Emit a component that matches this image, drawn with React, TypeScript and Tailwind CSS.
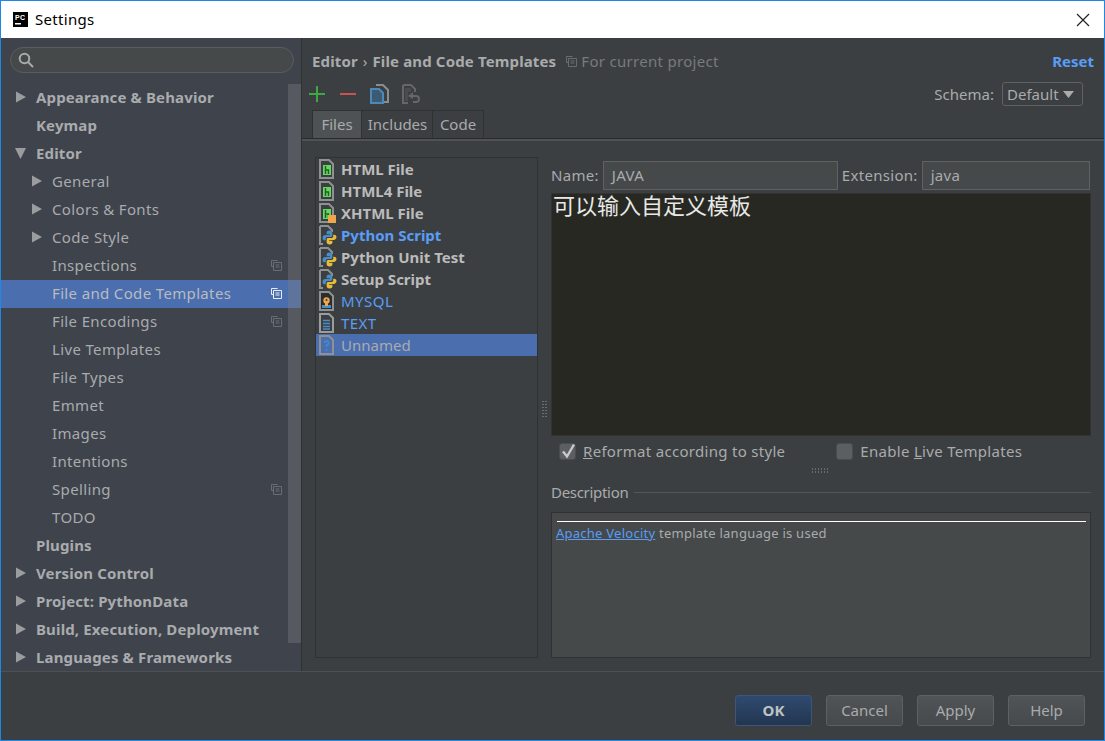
import React from 'react';

const font = "font-['Noto_Sans','Noto_Sans_CJK_SC',sans-serif]";

const Caret = ({ open }: { open?: boolean }) => (
  <svg width="12" height="14" viewBox="0 0 12 14" className="shrink-0">
    {open ? <path d="M1 2h11L6.5 13z" fill="#9a9c9e" /> : <path d="M2 1.5v11l10-5.5z" fill="#9a9c9e" />}
  </svg>
);

const ProjectIcon = ({ active }: { active?: boolean }) => {
  const c = active ? '#e8edf5' : '#6a6d70';
  return (
    <svg width="12" height="12" viewBox="0 0 12 12" fill="none" className="shrink-0">
      <path d="M7.5 1.5h-6v6H3.5" stroke={c} />
      <path d="M3.5 3.5h8v8h-8z" stroke={c} />
      <path d="M5.5 6h4M5.5 8h4" stroke={c} />
    </svg>
  );
};

const tree: { label: string; level: number; caret?: 'open' | 'closed'; icon?: boolean; active?: boolean }[] = [
  { label: 'Appearance & Behavior', level: 0, caret: 'closed' },
  { label: 'Keymap', level: 0 },
  { label: 'Editor', level: 0, caret: 'open' },
  { label: 'General', level: 1, caret: 'closed' },
  { label: 'Colors & Fonts', level: 1, caret: 'closed' },
  { label: 'Code Style', level: 1, caret: 'closed' },
  { label: 'Inspections', level: 1, icon: true },
  { label: 'File and Code Templates', level: 1, icon: true, active: true },
  { label: 'File Encodings', level: 1, icon: true },
  { label: 'Live Templates', level: 1 },
  { label: 'File Types', level: 1 },
  { label: 'Emmet', level: 1 },
  { label: 'Images', level: 1 },
  { label: 'Intentions', level: 1 },
  { label: 'Spelling', level: 1, icon: true },
  { label: 'TODO', level: 1 },
  { label: 'Plugins', level: 0 },
  { label: 'Version Control', level: 0, caret: 'closed' },
  { label: 'Project: PythonData', level: 0, caret: 'closed' },
  { label: 'Build, Execution, Deployment', level: 0, caret: 'closed' },
  { label: 'Languages & Frameworks', level: 0, caret: 'closed' },
];

const Sidebar = () => (
  <aside className="relative flex w-[301px] shrink-0 flex-col border-r border-[#2f3133] bg-[#3e434c]">
    <div className="flex h-[46px] shrink-0 items-center pb-[6px] pl-[9px] pt-[4px]">
      <div className="flex h-[26px] w-[284px] shrink-0 items-center rounded-[13px] border border-[#5a5d5f] bg-[#45494a] pl-[6px]">
        <svg width="18" height="18" viewBox="0 0 18 18" fill="none">
          <circle cx="7.5" cy="7.5" r="4.8" stroke="#a8aaac" strokeWidth="2" />
          <path d="M11 11l5 5" stroke="#a8aaac" strokeWidth="2" />
        </svg>
      </div>
    </div>
    <div className="min-h-0 flex-1 overflow-hidden">
      {tree.map((row) => (
        <div
          key={row.label}
          className={`flex h-[28px] items-center pb-[2px] pr-[19px] text-[15px] ${row.active ? 'bg-[#4b6eaf]' : ''} ${
            row.level === 0 ? 'font-bold tracking-[0.14px]' : 'tracking-[0.35px]'
          } ${row.active ? 'text-[#b9bcbf]' : 'text-[#a9abad]'}`}
        >
          <span className={`flex shrink-0 justify-end pr-[2px] ${row.level === 0 ? 'w-[27px]' : 'w-[43px]'}`}>
            {row.caret && <Caret open={row.caret === 'open'} />}
          </span>
          <span className="ml-[8px]">{row.label}</span>
          {row.icon && (
            <span className="ml-auto">
              <ProjectIcon active={row.active} />
            </span>
          )}
        </div>
      ))}
    </div>
    {/* scrollbar */}
    <div className="absolute right-0 top-[46px] h-[559px] w-[13px] bg-[#7a7d80]/40" />
  </aside>
);

const HtmlIcon = ({ badge }: { badge?: boolean }) => (
  <svg width="18" height="20" viewBox="0 0 18 20" className="shrink-0">
    <path d="M1 1h9l4 4v14H1z" fill="#3c3f41" stroke="#8e9092" strokeWidth="2" />
    <rect x="4" y="6" width="8" height="10" fill="#62d95f" />
    <path d="M6.5 7v8M6.5 11h3v4" stroke="#2b5a2a" strokeWidth="1.4" fill="none" />
    {badge && <rect x="9" y="12" width="8" height="8" fill="#f0a64b" />}
  </svg>
);

const snake =
  'M8.5 0C5.5 0 5 1.4 5 3V4.5H9V5.5H3.5C1.5 5.5 0 6.8 0 9C0 11 1.2 12 3 12H4V10C4 8.8 5 7.8 6.2 7.8H10C11.2 7.8 12 7 12 6V3C12 1 10.8 0 8.5 0Z';

const PythonIcon = () => (
  <svg width="18" height="20" viewBox="0 0 18 20" className="shrink-0">
    <path d="M1 1h8l4 4v2M1 1v18h3" fill="none" stroke="#8e9092" strokeWidth="2" />
    <g transform="translate(3.5 5.5) scale(0.82)">
      <path d={snake} fill="#4a8cc4" />
    </g>
    <g transform="rotate(180 10.5 12.5) translate(3.5 5.5) scale(0.82)">
      <path d={snake} fill="#e8bc34" />
    </g>
  </svg>
);

const MysqlIcon = () => (
  <svg width="18" height="20" viewBox="0 0 18 20" className="shrink-0">
    <path d="M1 1h9l4 4v14H1z" fill="#2b2d2f" stroke="#8e9092" strokeWidth="2" />
    <rect x="3" y="14" width="9" height="3" fill="#4a8cc4" />
    <circle cx="7.5" cy="9.5" r="3.2" fill="#f0a64b" />
    <rect x="6" y="12" width="3" height="3" fill="#f0a64b" />
    <circle cx="7.5" cy="9" r="1" fill="#3c3f41" />
  </svg>
);

const TextIcon = () => (
  <svg width="18" height="20" viewBox="0 0 18 20" className="shrink-0">
    <path d="M1 1h9l4 4v14H1z" fill="#3c3f41" stroke="#9a9c9e" strokeWidth="2" />
    <path d="M4 7.5h7M4 10.5h7M4 13.5h7M4 16h7" stroke="#4a8cc4" strokeWidth="1.4" />
  </svg>
);

const UnknownIcon = () => (
  <svg width="18" height="20" viewBox="0 0 18 20" className="shrink-0">
    <path d="M1 1h9l4 4v14H1z" fill="#4b6eaf" stroke="#8e9092" strokeWidth="2" />
    <path d="M5.5 8q0-2 2-2t2 2-2 2v2M7.5 14v2" fill="none" stroke="#3d8fd0" strokeWidth="1.4" />
  </svg>
);

const files: { label: string; icon: React.ReactNode; cls: string; selected?: boolean }[] = [
  { label: 'HTML File', icon: <HtmlIcon />, cls: 'font-bold text-[#bbbbbb]' },
  { label: 'HTML4 File', icon: <HtmlIcon />, cls: 'font-bold text-[#bbbbbb]' },
  { label: 'XHTML File', icon: <HtmlIcon badge />, cls: 'font-bold text-[#bbbbbb]' },
  { label: 'Python Script', icon: <PythonIcon />, cls: 'font-bold text-[#589df6]' },
  { label: 'Python Unit Test', icon: <PythonIcon />, cls: 'font-bold text-[#bbbbbb]' },
  { label: 'Setup Script', icon: <PythonIcon />, cls: 'font-bold text-[#bbbbbb]' },
  { label: 'MYSQL', icon: <MysqlIcon />, cls: 'tracking-[0.5px] text-[#589df6]' },
  { label: 'TEXT', icon: <TextIcon />, cls: 'tracking-[0.4px] text-[#589df6]' },
  { label: 'Unnamed', icon: <UnknownIcon />, cls: 'text-[#a9abad]', selected: true },
];

const Toolbar = () => (
  <div className="flex h-[24px] items-center pl-[7px]">
    <svg width="16" height="16" viewBox="0 0 16 16" className="shrink-0">
      <path d="M8 0v16M0 8h16" stroke="#3ea843" strokeWidth="2" />
    </svg>
    <svg width="16" height="16" viewBox="0 0 16 16" className="ml-[15px] shrink-0">
      <path d="M0 8h16" stroke="#c75450" strokeWidth="2" />
    </svg>
    <svg width="19" height="20" viewBox="0 0 19 20" fill="none" className="ml-[14px] shrink-0">
      <path d="M6 1h7l5 5v12h-4" stroke="#8a8c8e" strokeWidth="2" />
      <path d="M1 5h8l4 4v10H1z" stroke="#4d88b8" strokeWidth="2" fill="#3c5a72" />
    </svg>
    <svg width="18" height="20" viewBox="0 0 18 20" fill="none" className="ml-[13px] shrink-0">
      <path d="M1 1h8l4 4v3M1 1v18h5" stroke="#646668" strokeWidth="2" />
      <path d="M3 4h6v4H3zM3 8h3v9H3z" fill="#4a4d4f" />
      <path d="M11 8L6 12l5 3v-2h3q2 0 2 2t-2 2h-3v2h3q4 0 4-4t-4-4h-3z" fill="#646668" />
    </svg>
  </div>
);

const Tabs = () => (
  <div className="mt-[4px] flex h-[28px] pl-[10px]">
    <div className="flex w-[50px] items-center justify-center border border-b-0 border-[#2f3133] bg-[#4e5254] text-[15px] text-[#a9abad]">Files</div>
    <div className="flex w-[71px] items-center justify-center border border-b-0 border-l-0 border-[#2f3133] pl-[1px] text-[15px] text-[#a9abad]">Includes</div>
    <div className="flex w-[51px] items-center justify-center border border-b-0 border-l-0 border-[#2f3133] text-[15px] text-[#a9abad]">Code</div>
  </div>
);

const FileList = () => (
  <div className="h-[501px] w-[223px] shrink-0 border border-[#2f3133]">
    {files.map((f) => (
      <div key={f.label} className={`flex h-[22px] items-center pl-[3px] text-[15px] ${f.selected ? 'bg-[#4b6eaf]' : ''}`}>
        <span className="flex w-[22px] shrink-0 items-center">{f.icon}</span>
        <span className={f.cls}>{f.label}</span>
      </div>
    ))}
  </div>
);

const Grip = ({ vertical }: { vertical?: boolean }) => (
  <svg width={vertical ? 5 : 18} height={vertical ? 18 : 5} className="shrink-0" fill="none">
    {vertical ? (
      <path d="M1 0v18M4 0v18" stroke="#9a9c9e" strokeDasharray="1 2" />
    ) : (
      <path d="M0 1h18M0 4h18" stroke="#9a9c9e" strokeDasharray="1 2" />
    )}
  </svg>
);

const Editor = () => (
  <div className="flex min-w-0 flex-1 flex-col">
    <div className="flex h-[29px] items-center pr-[1px] text-[15px] tracking-[0.3px] text-[#a9abad]">
      <span>Name:</span>
      <div className="ml-[4px] flex h-[29px] w-[235px] items-center border border-[#5f6163] bg-[#45494a] pl-[8px] text-[#a9abad]">JAVA</div>
      <span className="ml-[4px]">Extension:</span>
      <div className="ml-[4px] flex h-[29px] flex-1 items-center border border-[#5f6163] bg-[#45494a] pl-[8px] text-[#a9abad]">java</div>
    </div>
    <div className="mt-[3px] h-[243px] border border-[#323232] bg-[#272822] pl-[1px] text-[22px] leading-[22px] text-[#e8e8e8]">可以输入自定义模板</div>
    <div className="mt-[3px] flex h-[24px] items-center text-[15px] tracking-[0.3px] text-[#a9abad]">
      <span className="relative ml-[8px] h-[17px] w-[17px] rounded-[3px] border border-[#4a4c4e] bg-[#5c5f62]">
        <svg width="18" height="18" viewBox="0 0 18 18" fill="none" className="absolute -top-[2px] left-0">
          <path d="M3 9.5l4 5 7-12" stroke="#c8cacc" strokeWidth="2.4" />
        </svg>
      </span>
      <span className="ml-[7px]"><span className="underline">R</span>eformat according to style</span>
      <span className="ml-[51px] h-[17px] w-[17px] rounded-[3px] border border-[#4a4c4e] bg-[#5c5f62]" />
      <span className="ml-[7px]">Enable <span className="underline">L</span>ive Templates</span>
    </div>
    <div className="flex h-[11px] items-center justify-center pt-[3px]">
      <Grip />
    </div>
    <div className="mt-[6px] flex h-[24px] items-center text-[15px] tracking-[-0.3px] text-[#a9abad]">
      <span>Description</span>
      <span className="ml-[6px] h-px flex-1 bg-[#535557]" />
    </div>
    <div className="mt-[8px] h-[146px] border border-[#2f3133] bg-[#45494a] px-[4px] pt-[8px] text-[13px] tracking-[0.25px] text-[#a9abad]">
      <div className="ml-[1px] h-px bg-white" />
      <div className="mt-[2px] leading-[18px]"><span className="text-[#589df6] underline">Apache Velocity</span> template language is used</div>
    </div>
  </div>
);

const Footer = () => (
  <footer className="flex h-[69px] shrink-0 items-start justify-end gap-[14px] border-t border-[#4e5052] pr-[19px] pt-[23px] text-[15px] text-[#a9abad]">
    <div className="flex h-[31px] w-[77px] items-center justify-center rounded-[3px] border border-[#3c5578] bg-gradient-to-b from-[#2f4a70] to-[#233650] font-bold text-[#c0c2c4]">OK</div>
    <div className="flex h-[31px] w-[77px] items-center justify-center rounded-[3px] border border-[#5e6062] bg-gradient-to-b from-[#505456] to-[#464a4c]">Cancel</div>
    <div className="flex h-[31px] w-[77px] items-center justify-center rounded-[3px] border border-[#5e6062] bg-gradient-to-b from-[#505456] to-[#464a4c]">Apply</div>
    <div className="flex h-[31px] w-[77px] items-center justify-center rounded-[3px] border border-[#5e6062] bg-gradient-to-b from-[#505456] to-[#464a4c]">Help</div>
  </footer>
);

export default function App() {
  return (
    <div className={`flex h-[741px] w-[1105px] flex-col overflow-hidden border border-[#1e88e5] bg-[#3c3f41] ${font}`}>
      {/* title bar */}
      <div className="flex h-[37px] shrink-0 items-center bg-white pl-[12px] text-[15px] tracking-[0.3px] text-black">
        <svg width="15" height="15" viewBox="0 0 15 15" className="shrink-0">
          <rect width="15" height="15" fill="#000" />
          <rect x="2" y="11" width="6" height="1.5" fill="#fff" />
          <text x="2" y="8" fontSize="7" fontWeight="700" fill="#fff" fontFamily="Liberation Sans">PC</text>
        </svg>
        <span className="ml-[7px]">Settings</span>
        <svg width="14" height="14" viewBox="0 0 14 14" className="ml-auto mr-[14px]">
          <path d="M1 1l12 12M13 1L1 13" stroke="#222" strokeWidth="1.2" />
        </svg>
      </div>

      <div className="flex min-h-0 flex-1">
        <Sidebar />
        <main className="flex min-w-0 flex-1 flex-col">
          <div className="flex h-[44px] shrink-0 items-center pl-[10px] pr-[10px] pt-[2px] text-[15px] text-[#a9abad]">
            <span className="font-bold tracking-[0.14px]">Editor</span>
            <span className="mx-[5px]">›</span>
            <span className="font-bold tracking-[0.14px]">File and Code Templates</span>
            <span className="ml-[9px]"><ProjectIcon /></span>
            <span className="ml-[4px] tracking-[0.3px] text-[#787a7c]">For current project</span>
            <span className="ml-auto font-bold text-[#589df6]">Reset</span>
          </div>
          <div className="relative shrink-0">
            <Toolbar />
            <Tabs />
            <div className="absolute right-[21px] top-0 flex items-center text-[15px] text-[#a9abad]">
              <span>Schema:</span>
              <div className="ml-[8px] flex h-[24px] w-[81px] items-center justify-between rounded-[3px] border border-[#5f6163] pl-[4px] pr-[8px]">
                <span>Default</span>
                <svg width="11" height="7" viewBox="0 0 11 7"><path d="M0 0h11L5.5 7z" fill="#a9abad" /></svg>
              </div>
            </div>
          </div>
          <div className="h-[3px] shrink-0 border-t border-[#2b2b2b] bg-[#4e5254]" />
          <div className="flex min-h-0 flex-1 pl-[13px] pr-[13px] pt-[16px]">
            <FileList />
            <div className="flex w-[13px] shrink-0 items-center justify-center pb-[8px]">
              <Grip vertical />
            </div>
            <div className="mt-[4px] flex min-w-0 flex-1 flex-col">
              <Editor />
            </div>
          </div>
        </main>
      </div>
      <Footer />
    </div>
  );
}
